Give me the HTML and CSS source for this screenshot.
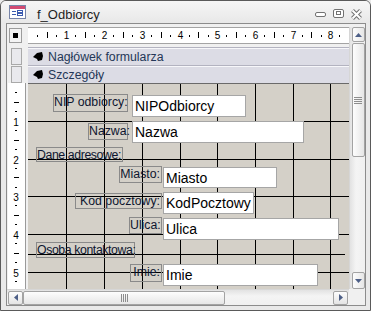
FILE: index.html
```html
<!DOCTYPE html>
<html lang="pl">
  <head>
    <meta charset="UTF-8" />
    <title>f_Odbiorcy</title>
    <link rel="stylesheet" href="styles.css">
  </head>
  <body>
    <div class="window">
      <div class="titlebar">
        <svg class="app-icon" width="17" height="14" viewBox="0 0 17 14">
          <rect x="0.5" y="0.5" width="16" height="13" fill="#fff" stroke="#7784a8" />
          <rect x="1" y="1" width="15" height="3" fill="#d24a72" />
          <rect x="3" y="6" width="4" height="1" fill="#3b5bb0" />
          <rect x="3" y="9" width="4" height="1" fill="#3b5bb0" />
          <rect x="8.5" y="5.5" width="5" height="2" fill="none" stroke="#3b5bb0" />
          <rect x="8.5" y="8.5" width="5" height="2" fill="none" stroke="#3b5bb0" />
        </svg>
        <span class="title">f_Odbiorcy</span>
        <svg class="caption-buttons" width="50" height="12" viewBox="0 0 50 12">
          <rect x="2.5" y="4.5" width="10" height="4" rx="1.5" fill="#fff" stroke="#727272" />
          <rect x="20.5" y="1.5" width="10" height="8" rx="1.5" fill="#fff" stroke="#727272" />
          <rect x="23.5" y="3.5" width="4" height="3" fill="none" stroke="#727272" />
          <path d="M39.5 2.5L47.5 10.5M47.5 2.5L39.5 10.5" stroke="#727272" stroke-width="4" />
          <path d="M39.5 2.5L47.5 10.5M47.5 2.5L39.5 10.5" stroke="#fff" stroke-width="2" />
        </svg>
      </div>

      <div class="client">
        <div class="corner"><span class="corner-dot"></span></div>

        <div class="hruler">
          <svg width="321" height="15" viewBox="0 0 321 15">
            <g fill="#000">
              <rect x="9" y="7" width="1" height="2" /><rect x="19" y="4" width="1" height="6" /><rect x="28" y="7" width="1" height="2" />
              <rect x="47" y="7" width="1" height="2" /><rect x="57" y="4" width="1" height="6" /><rect x="66" y="7" width="1" height="2" />
              <rect x="85" y="7" width="1" height="2" /><rect x="95" y="4" width="1" height="6" /><rect x="104" y="7" width="1" height="2" />
              <rect x="123" y="7" width="1" height="2" /><rect x="133" y="4" width="1" height="6" /><rect x="142" y="7" width="1" height="2" />
              <rect x="161" y="7" width="1" height="2" /><rect x="170" y="4" width="1" height="6" /><rect x="180" y="7" width="1" height="2" />
              <rect x="198" y="7" width="1" height="2" /><rect x="208" y="4" width="1" height="6" /><rect x="217" y="7" width="1" height="2" />
              <rect x="236" y="7" width="1" height="2" /><rect x="246" y="4" width="1" height="6" /><rect x="255" y="7" width="1" height="2" />
              <rect x="274" y="7" width="1" height="2" /><rect x="283" y="4" width="1" height="6" /><rect x="293" y="7" width="1" height="2" />
              <rect x="311" y="7" width="1" height="2" />
            </g>
            <g class="ruler-num" text-anchor="middle">
              <text x="38.5" y="11">1</text>
              <text x="76.5" y="11">2</text>
              <text x="114.5" y="11">3</text>
              <text x="152.5" y="11">4</text>
              <text x="189.5" y="11">5</text>
              <text x="227.5" y="11">6</text>
              <text x="265.5" y="11">7</text>
              <text x="302.5" y="11">8</text>
            </g>
          </svg>
        </div>

        <div class="vscroll">
          <div class="sb-btn sb-up">
            <svg width="7" height="4" viewBox="0 0 7 4"><polygon points="3.5,0 7,4 0,4" fill="#4d5f87" /></svg>
          </div>
          <div class="sb-thumb sb-thumb-v"><span class="grip-h"></span></div>
          <div class="sb-track"></div>
          <div class="sb-btn sb-down">
            <svg width="7" height="4" viewBox="0 0 7 4"><polygon points="0,0 7,0 3.5,4" fill="#4d5f87" /></svg>
          </div>
        </div>

        <div class="selector sel-header"></div>
        <div class="section-bar bar-header">
          <svg class="marker" width="10" height="10" viewBox="0 0 10 10"><path d="M0 5L4 1L9 0L10 4L9 8L5 9L4 7Z" fill="#000" /></svg>
          Nagłówek formularza
        </div>

        <div class="selector sel-detail"></div>
        <div class="section-bar bar-detail">
          <svg class="marker" width="10" height="10" viewBox="0 0 10 10"><path d="M0 5L4 1L9 0L10 4L9 8L5 9L4 7Z" fill="#000" /></svg>
          Szczegóły
        </div>

        <div class="vruler">
          <svg width="17" height="206" viewBox="0 0 17 206">
            <g fill="#000">
              <rect x="7" y="9" width="2" height="1" /><rect x="6" y="19" width="5" height="1" /><rect x="7" y="28" width="2" height="1" />
              <rect x="7" y="47" width="2" height="1" /><rect x="6" y="57" width="5" height="1" /><rect x="7" y="66" width="2" height="1" />
              <rect x="7" y="85" width="2" height="1" /><rect x="6" y="94" width="5" height="1" /><rect x="7" y="104" width="2" height="1" />
              <rect x="7" y="122" width="2" height="1" /><rect x="6" y="132" width="5" height="1" /><rect x="7" y="141" width="2" height="1" />
              <rect x="7" y="160" width="2" height="1" /><rect x="6" y="170" width="5" height="1" /><rect x="7" y="179" width="2" height="1" />
              <rect x="7" y="198" width="2" height="1" />
            </g>
            <g class="ruler-num" text-anchor="middle">
              <text x="8" y="43">1</text>
              <text x="8" y="81">2</text>
              <text x="8" y="118">3</text>
              <text x="8" y="156">4</text>
              <text x="8" y="194">5</text>
            </g>
          </svg>
        </div>

        <div class="canvas">
          <svg class="grid-lines" width="321" height="206" viewBox="0 0 321 206">
            <path d="M0 0.5H321" stroke="#6a6a6a" />
            <path d="M38.5 1V206M76.5 1V206M114.5 1V206M152.5 1V206M189.5 1V206M227.5 1V206M265.5 1V206M302.5 1V206M0 38.5H321M0 76.5H321M0 113.5H321M0 151.5H321M0 171.5H317M0 189.5H321" stroke="#000" />
          </svg>

          <div class="lbl" style="left:25px;top:11px;width:75px;height:18px">NIP odbiorcy:</div>
          <div class="tb" style="left:104px;top:12px;width:114px;height:22px">NIPOdbiorcy</div>

          <div class="lbl" style="left:60px;top:40px;width:40px;height:17px">Nazwa:</div>
          <div class="tb" style="left:104px;top:38px;width:172px;height:22px">Nazwa</div>

          <div class="lbl lbl-left" style="left:8px;top:64px;width:87px;height:15px">Dane adresowe:</div>

          <div class="lbl" style="left:91px;top:83px;width:43px;height:17px">Miasto:</div>
          <div class="tb" style="left:135px;top:84px;width:114px;height:21px">Miasto</div>

          <div class="lbl" style="left:47px;top:110px;width:87px;height:16px">Kod pocztowy:</div>
          <div class="tb" style="left:135px;top:109px;width:91px;height:22px">KodPocztowy</div>

          <div class="lbl" style="left:101px;top:134px;width:33px;height:17px">Ulica:</div>
          <div class="tb" style="left:135px;top:135px;width:176px;height:22px">Ulica</div>

          <div class="lbl lbl-left" style="left:8px;top:159px;width:99px;height:16px">Osoba kontaktowa:</div>

          <div class="lbl" style="left:102px;top:181px;width:32px;height:18px">Imie:</div>
          <div class="tb" style="left:135px;top:181px;width:155px;height:22px">Imie</div>
        </div>

        <div class="hscroll">
          <div class="sb-btn sb-left">
            <svg width="4" height="7" viewBox="0 0 4 7"><polygon points="0,3.5 4,0 4,7" fill="#4d5f87" /></svg>
          </div>
          <div class="sb-thumb sb-thumb-h"><span class="grip-v"></span></div>
          <div class="sb-track"></div>
          <div class="sb-btn sb-right">
            <svg width="4" height="7" viewBox="0 0 4 7"><polygon points="0,0 4,3.5 0,7" fill="#4d5f87" /></svg>
          </div>
        </div>
      </div>
    </div>
  </body>
</html>
```

FILE: styles.css
```css
* {
  box-sizing: border-box;
}
body {
  margin: 0;
  font-family: "Liberation Sans", Arial, sans-serif;
  background-color: #eaeaea;
}

/* okno */
.window {
  width: 371px;
  height: 311px;
  border: 1px solid #5a5a5a;
  border-radius: 6px 6px 0 0;
  background-color: #e9e9e9;
  display: flex;
  flex-direction: column;
  overflow: hidden;
}
.titlebar {
  height: 22px;
  flex: none;
  display: flex;
  align-items: flex-start;
  padding: 0 7px 0 8px;
  background: linear-gradient(#f6f6f6, #e8e8e8);
}
.app-icon {
  margin-top: 4px;
}
.title {
  margin-left: 11px;
  margin-top: 6px;
  font-size: 13px;
  line-height: 16px;
  color: #1e1e1e;
}
.caption-buttons {
  margin-left: auto;
  margin-top: 7px;
}

.client {
  margin: 0 4px 4px 5px;
  border: 1px solid #8c8c8c;
  background-color: #f0f0f0;
  display: grid;
  grid-template-columns: 21px 321px 16px;
  grid-template-rows: 3px 17px 3px 18px 18px 206px 16px;
}

/* linijki */
.corner {
  grid-column: 1;
  grid-row: 2;
  margin: 1px 0 1px 2px;
  width: 13px;
  border: 1px solid #9c9c9c;
  background-color: #f4f4f4;
  display: flex;
  justify-content: center;
  align-items: center;
}
.corner-dot {
  width: 5px;
  height: 5px;
  background-color: #000;
}
.hruler {
  grid-column: 2;
  grid-row: 2;
  background-color: #fff;
  border-top: 1px solid #a4a4a4;
  border-bottom: 1px solid #a4a4a4;
}
.hruler svg,
.vruler svg,
.grid-lines {
  display: block;
}
.ruler-num {
  font-family: "Liberation Sans", Arial, sans-serif;
  font-size: 10px;
  fill: #000;
}
.vruler {
  grid-column: 1;
  grid-row: 6;
  margin-left: 1px;
  width: 18px;
  background-color: #fff;
  border-right: 1px solid #9a9a9a;
}

/* sekcje */
.selector {
  grid-column: 1;
  margin: 1px 0 0 4px;
  width: 11px;
  border: 1px solid #a9a9a9;
  background-color: #e9e9ed;
}
.sel-header {
  grid-row: 4;
}
.sel-detail {
  grid-row: 5;
}
.section-bar {
  grid-column: 2;
  display: flex;
  align-items: center;
  padding-left: 5px;
  background-color: #dcdce5;
  border-top: 1px solid #b3b3c0;
  box-shadow: inset 0 1px #f7f7fa;
  font-size: 12.3px;
  color: #243757;
  white-space: nowrap;
}
.bar-header {
  grid-row: 4;
}
.bar-detail {
  grid-row: 5;
}
.marker {
  margin-right: 5px;
  flex: none;
}

/* obszar projektu */
.canvas {
  grid-column: 2;
  grid-row: 6;
  position: relative;
  background-color: #d4d0c8;
  overflow: hidden;
}
.grid-lines {
  position: absolute;
  left: 0;
  top: 0;
}
.lbl {
  position: absolute;
  border: 1px solid #8a8a8a;
  font-size: 12.3px;
  line-height: 14px;
  color: #0e1630;
  text-align: right;
  padding: 0 1px 0 0;
  white-space: nowrap;
}
.lbl-left {
  text-align: left;
  padding: 0;
  letter-spacing: -0.4px;
}
.tb {
  position: absolute;
  background-color: #fff;
  border: 1px solid #a6a6a6;
  font-size: 14px;
  line-height: 20px;
  padding-left: 2px;
  color: #000;
  white-space: nowrap;
  overflow: hidden;
}

/* paski przewijania */
.vscroll {
  grid-column: 3;
  grid-row: 2 / 7;
  display: flex;
  flex-direction: column;
  align-items: center;
  padding-left: 1px;
  background: linear-gradient(to right, #e2e2e2, #f4f4f4 40%, #f0f0f0);
  border-left: 1px solid #d6d6d6;
}
.hscroll {
  grid-column: 1 / 3;
  grid-row: 7;
  display: flex;
  align-items: center;
  padding: 0 1px;
  background: linear-gradient(#e2e2e2, #f4f4f4 40%, #f0f0f0);
  border-top: 1px solid #d6d6d6;
}
.sb-btn,
.sb-thumb {
  border: 1px solid #a3a3a3;
  border-radius: 2px;
  display: flex;
  justify-content: center;
  align-items: center;
  flex: none;
}
.sb-btn {
  background: linear-gradient(#fdfdfd, #e4e4e4);
}
.vscroll .sb-btn,
.vscroll .sb-thumb {
  width: 13px;
  background: linear-gradient(to right, #fdfdfd, #e6e6e6);
}
.hscroll .sb-btn,
.hscroll .sb-thumb {
  height: 14px;
}
.sb-up {
  height: 15px;
}
.sb-down {
  height: 17px;
}
.sb-thumb-v {
  margin-top: 1px;
  height: 114px;
}
.sb-left,
.sb-right {
  width: 15px;
}
.sb-thumb-h {
  width: 202px;
  background: linear-gradient(#fdfdfd, #e6e6e6);
}
.sb-track {
  flex: 1;
}
.grip-h {
  width: 8px;
  height: 7px;
  background: repeating-linear-gradient(#8d8d8d 0 1px, transparent 1px 2px);
}
.grip-v {
  width: 7px;
  height: 8px;
  background: repeating-linear-gradient(to right, #8d8d8d 0 1px, transparent 1px 2px);
}
```
